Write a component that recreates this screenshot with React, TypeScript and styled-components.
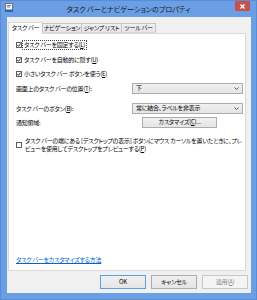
import React from "react";
import styled, { createGlobalStyle } from "styled-components";

const GlobalStyle = createGlobalStyle`
  html, body {
    margin: 0;
    padding: 0;
    background: #ffffff;
  }
  body {
    font-family: "Noto Sans CJK JP", "Noto Sans", sans-serif;
    color: #000;
  }
`;

const Window = styled.div`
  width: 257px;
  height: 300px;
  box-sizing: border-box;
  background: #6b9fe5;
  border: 1px solid #5a8cd3;
  padding: 0 5px 6px 6px;
  display: flex;
  flex-direction: column;
`;

const TitleBar = styled.div`
  height: 16px;
  margin: 0 -5px 0 -6px;
  display: grid;
  grid-template-columns: 1fr auto 1fr;
  align-items: start;
`;

const TitleIcon = styled.div`
  margin: 2px 0 0 4px;
  width: 8px;
  height: 9px;
  display: flex;
`;

const Title = styled.div`
  font-size: 7.2px;
  line-height: 16px;
  letter-spacing: -0.1px;
  font-feature-settings: "palt";
  color: #1a1a1a;
  white-space: nowrap;
`;

const CloseButton = styled.div`
  justify-self: end;
  margin-right: 6px;
  width: 15px;
  height: 10px;
  background: #c75050;
  display: flex;
  align-items: center;
  justify-content: center;
`;

const Client = styled.div`
  flex: 1;
  background: #f0f0f0;
  display: flex;
  flex-direction: column;
  padding: 5px 3px 4px 1px;
  font-size: 6px;
  line-height: 8px;
  letter-spacing: -0.25px;
  font-feature-settings: "palt";
`;

const TabRow = styled.div`
  height: 11px;
  display: flex;
  align-items: flex-end;
  position: relative;
  z-index: 1;
`;

const Tab = styled.div<{ $w: number; $active?: boolean }>`
  box-sizing: border-box;
  width: ${(p) => p.$w}px;
  height: ${(p) => (p.$active ? 12 : 10)}px;
  margin-bottom: ${(p) => (p.$active ? -1 : 0)}px;
  border: 1px solid ${(p) => (p.$active ? "#d9d9d9" : "#c4c4c4")};
  border-bottom: ${(p) => (p.$active ? "none" : "1px solid #d9d9d9")};
  background: ${(p) =>
    p.$active ? "#ffffff" : "linear-gradient(#f0f0f0, #e5e5e5)"};
  display: flex;
  align-items: center;
  justify-content: center;
  white-space: nowrap;
  padding-bottom: ${(p) => (p.$active ? 1 : 0)}px;
  & + & {
    margin-left: -1px;
  }
`;

const Panel = styled.div`
  flex: 1;
  margin-right: 2px;
  background: #ffffff;
  border: 1px solid #d9d9d9;
  padding: 4px 2px 6px 7px;
  display: flex;
  flex-direction: column;
`;

const CheckRow = styled.div`
  height: 14.5px;
  display: flex;
  align-items: center;
  white-space: nowrap;
`;

const Box = styled.div`
  box-sizing: border-box;
  width: 6px;
  height: 6px;
  border: 1px solid #5f5f5f;
  background: #fff;
  margin-right: 1px;
  flex-shrink: 0;
  display: flex;
  align-items: center;
  justify-content: center;
`;

const CheckLabel = styled.span<{ $focus?: boolean }>`
  padding: 0 1px;
  outline: ${(p) => (p.$focus ? "1px dotted #444" : "none")};
  outline-offset: 0;
`;

const FormRow = styled.div<{ $gap: number }>`
  display: flex;
  align-items: center;
  margin-top: ${(p) => p.$gap}px;
  height: 11px;
`;

const FieldLabel = styled.div`
  width: 116px;
  white-space: nowrap;
  padding-top: 2px;
`;

const Select = styled.div`
  box-sizing: border-box;
  width: 111px;
  height: 11px;
  border: 1px solid #acacac;
  background: linear-gradient(#f0f0f0, #e5e5e5);
  display: flex;
  align-items: center;
  justify-content: space-between;
  padding: 0 3px 0 3px;
  white-space: nowrap;
`;

const PushButton = styled.div<{ $w: number; $h: number; $default?: boolean; $disabled?: boolean }>`
  box-sizing: border-box;
  width: ${(p) => p.$w}px;
  height: ${(p) => p.$h}px;
  border: 1px solid
    ${(p) => (p.$default ? "#5aa0dd" : p.$disabled ? "#c8c8c8" : "#acacac")};
  background: ${(p) =>
    p.$disabled ? "#f4f4f4" : "linear-gradient(#f0f0f0, #e5e5e5)"};
  color: ${(p) => (p.$disabled ? "#8a8a8a" : "#000")};
  display: flex;
  align-items: center;
  justify-content: center;
  white-space: nowrap;
`;

const CustomizeSlot = styled.div`
  width: 111px;
  padding-left: 10px;
  box-sizing: border-box;
`;

const MultiCheck = styled.div`
  display: flex;
  align-items: center;
  margin-top: 9px;
  white-space: nowrap;
`;

const MultiText = styled.div`
  padding-left: 2px;
  line-height: 8px;
`;

const HelpLink = styled.a`
  margin-top: auto;
  color: #0066cc;
  text-decoration: underline;
  white-space: nowrap;
  align-self: flex-start;
`;

const ButtonBar = styled.div`
  margin-top: 4px;
  display: flex;
  justify-content: flex-end;
  gap: 5px;
`;

const Check = () => (
  <svg width="4" height="4" viewBox="0 0 4 4">
    <path d="M0.3 2 L1.5 3.3 L3.7 0.5" fill="none" stroke="#222" strokeWidth="1" />
  </svg>
);

const Chevron = () => (
  <svg width="5" height="3" viewBox="0 0 5 3">
    <path d="M0.5 0.5 L2.5 2.5 L4.5 0.5" fill="none" stroke="#444" strokeWidth="0.9" />
  </svg>
);

const App: React.FC = () => {
  return (
    <>
      <GlobalStyle />
      <Window>
        <TitleBar>
          <TitleIcon>
            <svg width="8" height="9" viewBox="0 0 8 9">
              <rect x="0.5" y="0.5" width="7" height="7" fill="#f4f6f8" stroke="#6d7680" />
              <path d="M2 2.5 H6 M2 4 H5" stroke="#5b6470" strokeWidth="0.8" />
              <rect x="0" y="6.5" width="8" height="2.5" fill="#2f63b8" />
            </svg>
          </TitleIcon>
          <Title>タスク バーとナビゲーションのプロパティ</Title>
          <CloseButton>
            <svg width="5" height="5" viewBox="0 0 5 5">
              <path d="M0.5 0.5 L4.5 4.5 M4.5 0.5 L0.5 4.5" stroke="#fff" strokeWidth="1.3" />
            </svg>
          </CloseButton>
        </TitleBar>
        <Client>
          <TabRow>
            <Tab $w={35} $active>タスク バー</Tab>
            <Tab $w={40}>ナビゲーション</Tab>
            <Tab $w={41}>ジャンプ リスト</Tab>
            <Tab $w={35}>ツール バー</Tab>
          </TabRow>
          <Panel>
            <CheckRow>
              <Box><Check /></Box>
              <CheckLabel $focus>タスク バーを固定する(<u>L</u>)</CheckLabel>
            </CheckRow>
            <CheckRow>
              <Box><Check /></Box>
              <CheckLabel>タスク バーを自動的に隠す(<u>U</u>)</CheckLabel>
            </CheckRow>
            <CheckRow>
              <Box><Check /></Box>
              <CheckLabel>小さいタスク バー ボタンを使う(<u>E</u>)</CheckLabel>
            </CheckRow>

            <FormRow $gap={1}>
              <FieldLabel>画面上のタスク バーの位置(<u>T</u>):</FieldLabel>
              <Select>
                <span>下</span>
                <Chevron />
              </Select>
            </FormRow>
            <FormRow $gap={9}>
              <FieldLabel>タスク バーのボタン(<u>B</u>):</FieldLabel>
              <Select>
                <span>常に結合、ラベルを非表示</span>
                <Chevron />
              </Select>
            </FormRow>
            <FormRow $gap={3}>
              <FieldLabel>通知領域:</FieldLabel>
              <CustomizeSlot>
                <PushButton $w={75} $h={11}>カスタマイズ(<u>C</u>)...</PushButton>
              </CustomizeSlot>
            </FormRow>

            <MultiCheck>
              <Box />
              <MultiText>
                タスク バーの端にある [デスクトップの表示] ボタンにマウス カーソルを置いたときに、プレ
                <br />
                ビューを使用してデスクトップをプレビューする(<u>P</u>)
              </MultiText>
            </MultiCheck>

            <HelpLink>タスク バーをカスタマイズする方法</HelpLink>
          </Panel>
          <ButtonBar>
            <PushButton $w={46} $h={14} $default>OK</PushButton>
            <PushButton $w={46} $h={14}>キャンセル</PushButton>
            <PushButton $w={46} $h={14} $disabled>適用(<u>A</u>)</PushButton>
          </ButtonBar>
        </Client>
      </Window>
    </>
  );
};

export default App;
